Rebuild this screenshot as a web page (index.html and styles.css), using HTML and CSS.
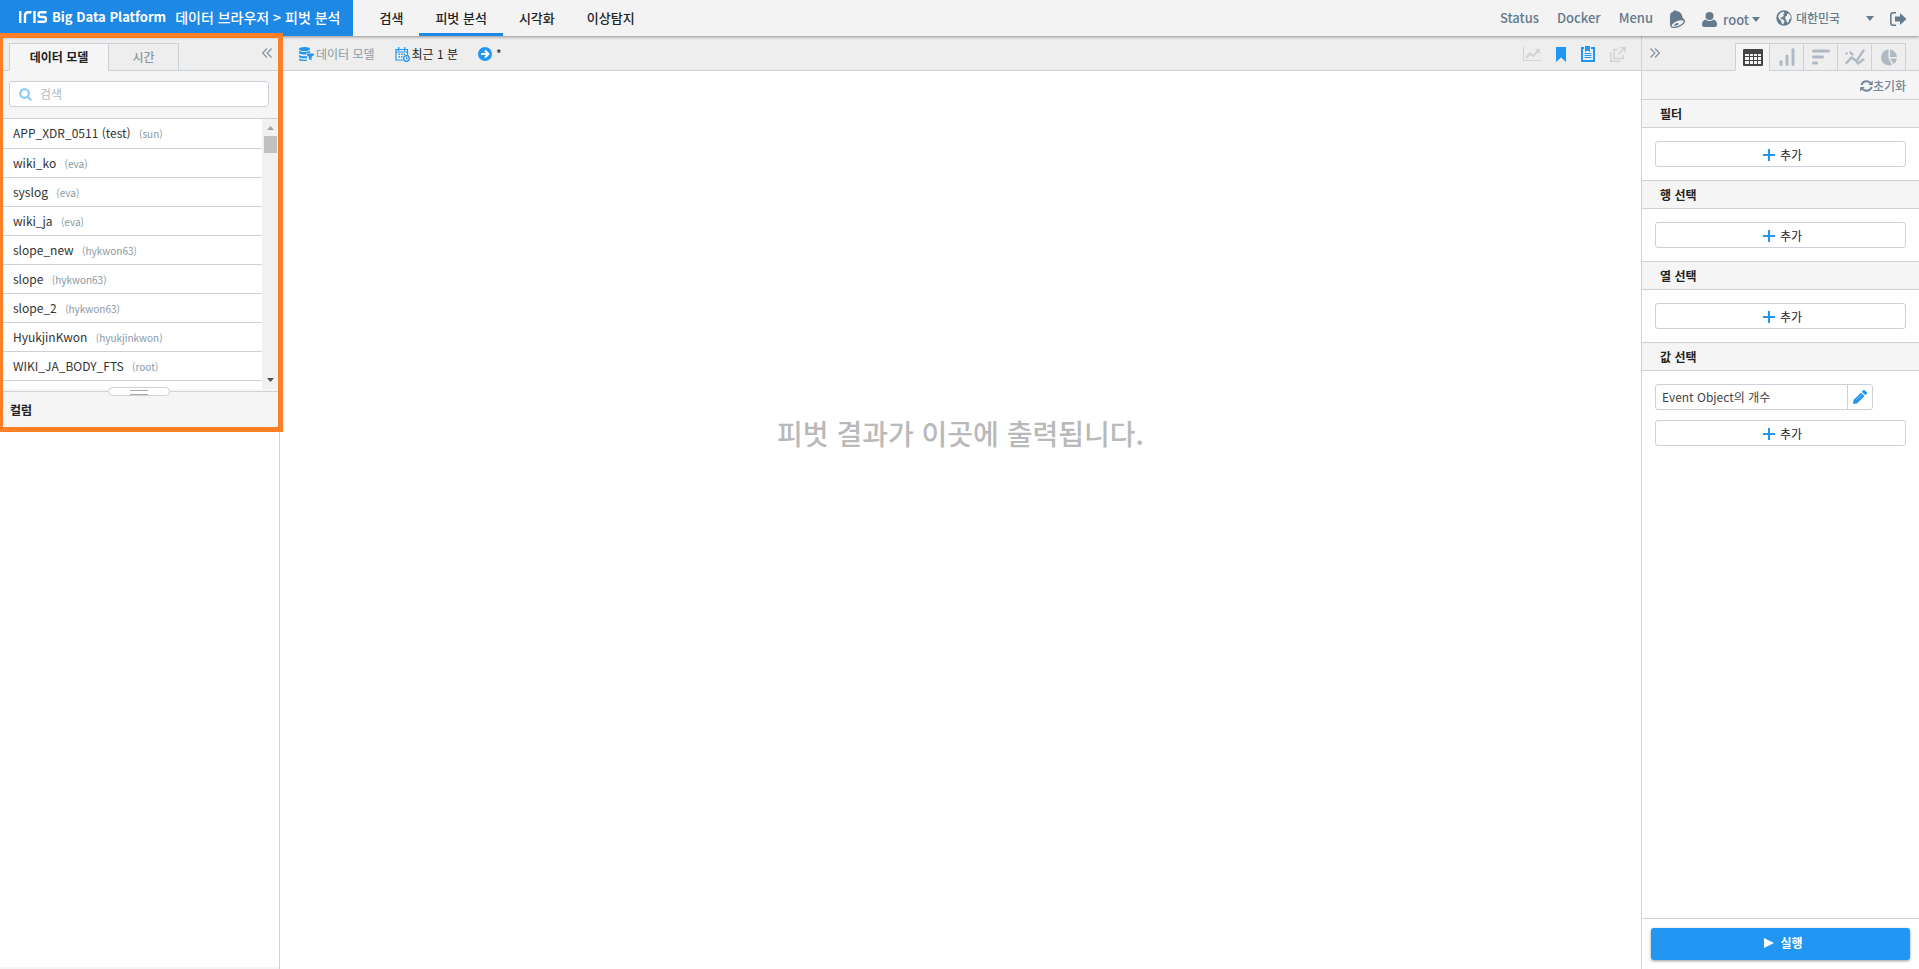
FILE: index.html
```html
<!DOCTYPE html>
<html lang="ko">
<head>
<meta charset="utf-8">
<title>IRIS Big Data Platform - 피벗 분석</title>
<link rel="stylesheet" href="styles.css">
</head>
<body>
<svg class="defs" aria-hidden="true">
  <symbol id="plus" viewBox="0 0 12 12"><path d="M5 0h2v5h5v2H7v5H5V7H0V5h5z"/></symbol>
</svg>
<div class="app">
  <header class="header">
    <div class="brand">
      <svg class="brand-logo" viewBox="0 0 28 12" role="img" aria-label="IRIS"><path d="M1.200 0v12M6 12V4.500Q6 1.200 9.500 1.200H12.500M15.500 0v12M27.500 1.200H21.500Q19.500 1.200 19.500 3.500T21.500 6H25Q27 6 27 8.400T25 10.800H18.500"/></svg>
      <span class="brand-name">Big Data Platform</span>
      <h1 class="brand-path">데이터 브라우저 &gt; 피벗 분석</h1>
    </div>
    <nav class="nav">
      <a href="#">검색</a>
      <a href="#" class="active" aria-current="page">피벗 분석</a>
      <a href="#">시각화</a>
      <a href="#">이상탐지</a>
    </nav>
    <div class="tools">
      <div class="links">
        <a href="#">Status</a>
        <a href="#">Docker</a>
        <a href="#">Menu</a>
      </div>
      <button class="icon-btn" aria-label="알림"><svg width="17" height="18" viewBox="0 0 17 18"><path d="M1.200 15.500C.500 12 1.200 9.500 1 7 .800 4 2 2 4.500 1.500 5-.200 6.800-.200 7.300 1c3.200.200 5 2 5.700 4.500.500 2 1.500 3.500 3 4.500L10 14z"/><ellipse cx="8.700" cy="13.500" rx="7.200" ry="3" transform="rotate(-22 8.700 13.500)" fill="#f3f3f3" stroke="currentColor" stroke-width="1.300"/><ellipse cx="7.500" cy="14.300" rx="2.300" ry="1.100" transform="rotate(-22 7.500 14.300)"/></svg></button>
      <button class="user"><svg width="15" height="15" viewBox="0 0 15 15"><circle cx="7.500" cy="4" r="4"/><path d="M3.500 7.500Q7.500 10.500 11.500 7.500 15 8.500 15 12.500 15 15 12.500 15h-10Q0 15 0 12.500 0 8.500 3.500 7.500z"/></svg><span>root</span><svg width="8" height="5" viewBox="0 0 8 5"><path d="M0 0h8L4 5z"/></svg></button>
      <label class="locale">
        <svg width="16" height="16" viewBox="0 0 16 16"><circle cx="8" cy="8" r="7.700"/><path fill="#f3f3f3" d="M3 4.500 5 2.500l2.500-.800L8.500 3 7 4.500l1 1L6 7.500l-1.500.300.500 1.400 2 .300 1.700 1.500-.700 1.500-1 2L5.500 13 5 10.500 3 9 2.200 6.500zM11 4l2-.500 1.500 2.500.300 2.500-1.300.500-.800 2.500-1.500 1.500-1-3-1.200-1.500.500-2 1.500-1z"/></svg>
        <select aria-label="언어"><option>대한민국</option><option>English</option></select>
        <svg width="8" height="5" viewBox="0 0 8 5"><path d="M0 0h8L4 5z"/></svg>
      </label>
      <button class="icon-btn" aria-label="로그아웃"><svg width="17" height="14" viewBox="0 0 17 14"><path d="M6 .800H3Q.800.800.800 3v8Q.800 13.200 3 13.200h3" fill="none" stroke="currentColor" stroke-width="1.500"/><path d="M5 4.500h5V1l6.500 6-6.500 6V9.500H5z"/></svg></button>
    </div>
  </header>

  <div class="workspace">
    <aside class="sidebar">
      <div class="tabbar">
        <div class="tabs" role="tablist">
          <button class="tab selected" role="tab" aria-selected="true">데이터 모델</button>
          <button class="tab" role="tab" aria-selected="false">시간</button>
        </div>
        <button class="collapse" aria-label="접기"><svg width="10" height="10" viewBox="0 0 10 10"><path d="M5 .500.700 5 5 9.500M9.500.500 5.200 5l4.300 4.500"/></svg></button>
      </div>
      <div class="search">
        <label class="search-box">
          <svg width="13" height="13" viewBox="0 0 13 13"><circle cx="5.500" cy="5.500" r="4.300"/><path d="m8.700 8.700 3.600 3.600"/></svg>
          <input type="text" placeholder="검색" aria-label="데이터 모델 검색">
        </label>
      </div>
      <div class="models">
        <ul class="model-list">
          <li><a href="#">APP_XDR_0511 (test) <small>(sun)</small></a></li>
          <li><a href="#">wiki_ko <small>(eva)</small></a></li>
          <li><a href="#">syslog <small>(eva)</small></a></li>
          <li><a href="#">wiki_ja <small>(eva)</small></a></li>
          <li><a href="#">slope_new <small>(hykwon63)</small></a></li>
          <li><a href="#">slope <small>(hykwon63)</small></a></li>
          <li><a href="#">slope_2 <small>(hykwon63)</small></a></li>
          <li><a href="#">HyukjinKwon <small>(hyukjinkwon)</small></a></li>
          <li><a href="#">WIKI_JA_BODY_FTS <small>(root)</small></a></li>
        </ul>
        <div class="scrollbar" aria-hidden="true">
          <svg class="up" width="7" height="4" viewBox="0 0 7 4"><path d="M0 4h7L3.500 0z"/></svg>
          <span class="thumb"></span>
          <svg class="down" width="7" height="4" viewBox="0 0 7 4"><path d="M0 0h7L3.500 4z"/></svg>
        </div>
      </div>
      <section class="columns">
        <span class="grip"></span>
        <h2>컬럼</h2>
      </section>
      <div class="column-area"></div>
      <div class="highlight"></div>
    </aside>

    <main class="main">
      <div class="toolbar">
        <div class="criteria">
          <span class="crit muted"><svg width="15" height="14" viewBox="0 0 15 14"><path d="M0 2Q0 0 5.500 0T11 2 5.500 4 0 2zM0 4q5 2 11 0v2H7v1.500Q1 7.500 0 6zM0 8q2 1.500 8 1.300v2Q1 11.500 0 10zM0 11.500q2 1.500 8 1.300v1Q1 14.500 0 13zM7.500 6.500H15v1.300L12.500 10v3.500L10 12v-2L7.500 7.800z"/></svg>데이터 모델</span>
          <span class="crit"><svg width="15" height="15" viewBox="0 0 15 15"><path d="M8 13H1V2.500h11.500V8M1 5h11.500M3.700 0v4M9.700 0v4" fill="none" stroke="currentColor" stroke-width="1.200"/><path d="M3.500 6.500h1.500V8H3.500zM6 6.500h1.500V8H6zM8.500 6.500H10V8H8.500zM3.500 9h1.500v1.500H3.500zM6 9h1.500v1.500H6z"/><circle cx="11.500" cy="11.500" r="2.800" fill="#eee" stroke="currentColor" stroke-width="1.300"/><path d="M11.500 9.800v2h1.300" fill="none" stroke="currentColor"/></svg>최근 1 분</span>
          <span class="crit go"><svg width="14" height="14" viewBox="0 0 14 14"><circle cx="7" cy="7" r="7"/><path d="M3 7h7M7 3.500 10.500 7 7 10.500" fill="none" stroke="#fff" stroke-width="2"/></svg>*</span>
        </div>
        <div class="actions">
          <button class="off" aria-label="차트"><svg width="18" height="14" viewBox="0 0 18 14"><path d="M.500 0v13.500H18" fill="none" stroke="currentColor"/><path d="m3 11 4-4.500L10 9l5-5" fill="none" stroke="currentColor" stroke-width="2"/><path d="M12 2h5v5z"/></svg></button>
          <button aria-label="북마크"><svg width="10" height="15" viewBox="0 0 10 15"><path d="M0 0h10v15l-5-4.500L0 15z"/></svg></button>
          <button aria-label="보고서"><svg width="14" height="16" viewBox="0 0 14 16"><path d="M3 2H1v13h12V2h-3" fill="none" stroke="currentColor" stroke-width="2"/><path d="M4 0h5v6L6.500 4.500 4 6zM3.500 7h7v1h-7zM3.500 9h7v1h-7zM3.500 11h7v1h-7z"/></svg></button>
          <button class="off" aria-label="새 창"><svg width="16" height="15" viewBox="0 0 16 15" fill="none" stroke="currentColor" stroke-width="1.500"><path d="M8 2.500H4v9h9V8M.800 5v9.200H10M10 .800h5v5M15 .800 8 7.500"/></svg></button>
        </div>
      </div>
      <p class="empty">피벗 결과가 이곳에 출력됩니다.</p>
    </main>

    <aside class="options">
      <div class="tabbar">
        <button class="collapse" aria-label="펼치기"><svg width="10" height="10" viewBox="0 0 10 10"><path d="M.500.500 4.800 5 .500 9.500M5 .500 9.300 5 5 9.500"/></svg></button>
        <div class="tabs" role="tablist">
          <button class="tab selected" role="tab" aria-selected="true" aria-label="표"><svg width="20" height="17" viewBox="0 0 20 17"><path fill-rule="evenodd" d="M1 0h18q1 0 1 1v15q0 1-1 1H1q-1 0-1-1V1q0-1 1-1zM2 5v2h4V5zm5 0v2h3V5zm4 0v2h3V5zm4 0v2h3V5zM2 8v3h4V8zm5 0v3h3V8zm4 0v3h3V8zm4 0v3h3V8zM2 12v3h4v-3zm5 0v3h3v-3zm4 0v3h3v-3zm4 0v3h3v-3z"/></svg></button>
          <button class="tab" role="tab" aria-selected="false" aria-label="세로 막대"><svg width="16" height="18" viewBox="0 0 16 18" fill="none" stroke="currentColor" stroke-width="3" stroke-linecap="round"><path d="M2 13.500v3M8 8v8.500M14 1.500v15"/></svg></button>
          <button class="tab" role="tab" aria-selected="false" aria-label="가로 막대"><svg width="18" height="16" viewBox="0 0 18 16" fill="none" stroke="currentColor" stroke-width="3" stroke-linecap="round"><path d="M1.500 2h15M1.500 8h9M1.500 14h3"/></svg></button>
          <button class="tab" role="tab" aria-selected="false" aria-label="꺾은선"><svg width="20" height="16" viewBox="0 0 20 16" fill="none" stroke="currentColor" stroke-width="2.400" stroke-linecap="round" stroke-linejoin="round"><path d="m1.500 14 5-5.500 5 3.500 7-10.500M1.500 4.500h.1M5.500 3.500l2 2M11 11.500l2 3 5.500-4"/></svg></button>
          <button class="tab" role="tab" aria-selected="false" aria-label="원형"><svg width="16" height="17" viewBox="0 0 16 17"><path d="M7.500.500V9l3.500 7q-3 1-6-.200A8 8 0 0 1 7.500.500zM9 .500A8 8 0 0 1 16 8H9zM9 9.500h7q-.500 3.500-3.500 5.500z"/></svg></button>
        </div>
      </div>
      <div class="reset-row"><button class="reset"><svg width="13" height="12" viewBox="0 0 13 12"><path d="M1.500 5Q2.500 1.300 6.500 1.300 8.800 1.300 10.500 3M11.500 7Q10.500 10.700 6.500 10.700 4.200 10.700 2.500 9" fill="none" stroke="currentColor" stroke-width="2"/><path d="M12.800.500V5H8.300zM.200 11.500V7h4.500z"/></svg>초기화</button></div>
      <section class="group"><h2>필터</h2><div class="group-body"><button class="add"><svg width="12" height="12"><use href="#plus"/></svg>추가</button></div></section>
      <section class="group"><h2>행 선택</h2><div class="group-body"><button class="add"><svg width="12" height="12"><use href="#plus"/></svg>추가</button></div></section>
      <section class="group"><h2>열 선택</h2><div class="group-body"><button class="add"><svg width="12" height="12"><use href="#plus"/></svg>추가</button></div></section>
      <section class="group"><h2>값 선택</h2><div class="group-body">
        <div class="field"><input type="text" value="Event Object의 개수" aria-label="값" readonly><button aria-label="편집"><svg width="14" height="14" viewBox="0 0 14 14"><path d="m0 14 .500-4L8 2.500l3.500 3.500L4 13.500zM8.800 1.700 10.500 0q.500-.300 1 0L14 2.500q.300.500 0 1L12.300 5.200z"/><path d="m3.500 9.500 5-5" stroke="#8cc8fa"/></svg></button></div>
        <button class="add"><svg width="12" height="12"><use href="#plus"/></svg>추가</button>
      </div></section>
      <footer class="run-bar"><button class="run"><svg width="10" height="10" viewBox="0 0 10 10"><path d="M0 0v10l10-5z"/></svg>실행</button></footer>
    </aside>
  </div>
</div>
</body>
</html>
```
FILE: styles.css
```css
* { box-sizing: border-box; }
html, body { height: 100%; margin: 0; }
body, button, input, select {
  font-family: "Noto Sans CJK KR", "Noto Sans", sans-serif;
  font-size: 12px;
  line-height: 18px;
  color: #222;
}
body { background: #fff; overflow: hidden; }
button { border: 0; padding: 0; background: none; cursor: pointer; }
a { color: inherit; text-decoration: none; }
h1, h2, p, ul { margin: 0; padding: 0; }
svg { display: block; flex: none; }
svg:not([fill]) { fill: currentColor; }
.defs { display: none; }

.app { display: flex; flex-direction: column; height: 100vh; }

/* Header */
.header {
  display: flex;
  height: 36px;
  flex: none;
  background: #f3f3f3;
  box-shadow: 0 1px 3px rgba(0, 0, 0, .4);
  position: relative;
  z-index: 1;
}
.brand {
  display: flex;
  align-items: center;
  padding: 0 13px 2px 19px;
  background: #1e88e5;
  color: #fff;
  white-space: nowrap;
}
.brand .brand-logo { width: 28px; height: 12px; fill: none; stroke: #fff; stroke-width: 2.4; }
.brand-name { margin: 0 9px 0 5px; font-size: 13px; font-weight: 700; }
.brand-path { font-size: 14px; font-weight: 500; }
.nav { display: flex; margin-left: 10px; font-size: 13px; font-weight: 500; }
.nav a { padding: 9px 16px 6px; border-bottom: 3px solid transparent; }
.nav .active { border-color: #1e88e5; }
.tools {
  display: flex;
  align-items: center;
  margin-left: auto;
  padding-right: 12px;
  gap: 16px;
  color: #647b8e;
  font-size: 13px;
  font-weight: 500;
}
.links { display: flex; gap: 18px; }
.tools button, .tools select { color: inherit; font-size: 13px; font-weight: 500; }
.tools .icon-btn { padding-top: 1px; }
.user { display: flex; align-items: center; gap: 3px; }
.tools .user { padding-top: 3px; }
.user span { margin-left: 3px; }
.locale { display: flex; align-items: center; }
.tools .locale select { appearance: none; width: 74px; padding: 0 0 0 4px; border: 0; background: none; font-size: 12px; font-weight: 500; }

/* Workspace */
.workspace { display: flex; flex: 1; min-height: 0; }
.sidebar {
  position: relative;
  display: flex;
  flex-direction: column;
  width: 280px;
  flex: none;
  border-right: 1px solid #cdd1d8;
}
.tabbar {
  display: flex;
  justify-content: space-between;
  height: 35px;
  flex: none;
  padding: 7px 7px 0 9px;
  background: #eee;
  border-bottom: 1px solid #cbd1d8;
}
.tabs { display: flex; }
.tab {
  display: flex;
  align-items: center;
  justify-content: center;
  width: 71px;
  height: 28px;
  margin-left: -1px;
  border: 1px solid #cbd1d8;
  background: #eee;
  color: #8899a6;
  font-weight: 500;
}
.tab.selected { background: #f5f5f5; border-bottom-color: #f5f5f5; color: #222; }
.sidebar .tab:first-child { width: 100px; margin-left: 0; font-weight: 700; }
.collapse { align-self: flex-start; padding: 5px 0 4px; color: #8899a6; }
.collapse svg { fill: none; stroke: currentColor; stroke-width: 1.3; }
.search { padding: 10px 10px 11px 9px; background: #f5f5f5; border-bottom: 1px solid #cbd1d8; }
.search-box {
  display: flex;
  align-items: center;
  gap: 8px;
  height: 26px;
  padding: 0 9px;
  border: 1px solid #cbd1d8;
  border-radius: 3px;
  background: #fff;
}
.search-box svg { fill: none; stroke: #90caf9; stroke-width: 2.2; }
.search-box input { flex: 1; min-width: 0; border: 0; padding: 0; outline: 0; background: none; }
.search-box input::placeholder { color: #b0b7be; }
.models { display: flex; height: 272px; flex: none; padding-bottom: 2px; background: #f5f5f5; }
.model-list { flex: 1; list-style: none; overflow: hidden; background: #fff; color: #333; }
.model-list a { display: block; height: 29px; padding: 5px 13px; border-bottom: 1px solid #cbd1d8; white-space: nowrap; }
.model-list li:first-child a { height: 30px; }
.model-list small { margin-left: 5px; font-size: 10px; color: #8899a6; }
.scrollbar { display: flex; flex-direction: column; align-items: center; width: 17px; padding: 7px 0; background: #f1f1f1; }
.thumb { width: 13px; height: 17px; margin-top: 6px; background: #c1c1c1; }
.up { color: #a3a3a3; }
.down { margin-top: auto; color: #505050; }
.columns { position: relative; border-top: 1px solid #cdd1d8; background: #f5f5f5; padding: 9px 10px; }
.columns h2 { font-size: 12px; }
.grip { position: absolute; top: -5px; left: 108px; width: 62px; height: 9px; border: 1px solid #cdd1d8; border-radius: 5px; background: #fff; }
.grip::after { content: ""; position: absolute; top: 2px; left: 21px; width: 18px; height: 3px; border: solid #aaa; border-width: 1px 0; }
.highlight { position: absolute; z-index: 2; top: -3px; left: -2px; width: 285px; height: 399px; border: 5px solid #ff7f27; pointer-events: none; }
.column-area { flex: 1; border-bottom: 2px solid #f5f5f5; }

/* Result area */
.main { display: flex; flex-direction: column; flex: 1; min-width: 0; }
.toolbar {
  display: flex;
  justify-content: space-between;
  height: 35px;
  padding: 2px 15px 0 19px;
  background: #eee;
  border-bottom: 1px solid #cbd1d8;
}
.criteria, .actions { display: flex; align-items: center; }
.criteria { gap: 20px; }
.crit { display: flex; align-items: center; gap: 2px; }
.crit svg, .actions { color: #2196f3; }
.muted { color: #8899a6; }
.go { gap: 4px; }
.actions { gap: 15px; }
.actions button { color: inherit; }
.actions .off { color: #ced4da; }
.empty { padding-top: 342px; text-align: center; font-size: 28px; line-height: 40px; font-weight: 500; color: #b9b9b9; }

/* Pivot options */
.options { display: flex; flex-direction: column; width: 278px; flex: none; border-left: 1px solid #cdd1d8; }
.options .tabbar { padding-right: 13px; padding-left: 8px; }
.options .tab { width: 35px; color: #b0bac5; }
.options .tab.selected { color: #444; }
.reset-row { display: flex; justify-content: flex-end; height: 28px; padding: 2px 13px 0; background: #f5f5f5; }
.reset { display: flex; align-items: center; color: #74879b; font-weight: 500; }
.group h2 { height: 29px; padding: 5px 18px; border: solid #cbd1d8; border-width: 1px 0; background: #f5f5f5; font-size: 12px; font-weight: 700; }
.group-body { display: flex; flex-direction: column; gap: 10px; padding: 13px; }
.add { display: flex; align-items: center; justify-content: center; gap: 5px; height: 26px; padding: 2px 0 0 4px; border: 1px solid #cbd1d8; border-radius: 3px; background: #fff; }
.add svg, .field svg { color: #2196f3; }
.field { display: flex; width: 218px; height: 26px; border: 1px solid #cbd1d8; border-radius: 3px; }
.field input { flex: 1; min-width: 0; padding: 0 6px; border: 0; background: none; color: #444; }
.field button { display: flex; align-items: center; justify-content: center; width: 25px; border-left: 1px solid #cbd1d8; }
.run-bar { margin-top: auto; padding: 9px; border-top: 1px solid #cbd1d8; }
.run { display: flex; align-items: center; justify-content: center; gap: 6px; width: 100%; height: 32px; padding: 0 0 2px 6px; border-radius: 3px; background: #2196f3; color: #fff; font-weight: 700; box-shadow: 0 1px 3px rgba(0, 0, 0, .4); }
```
